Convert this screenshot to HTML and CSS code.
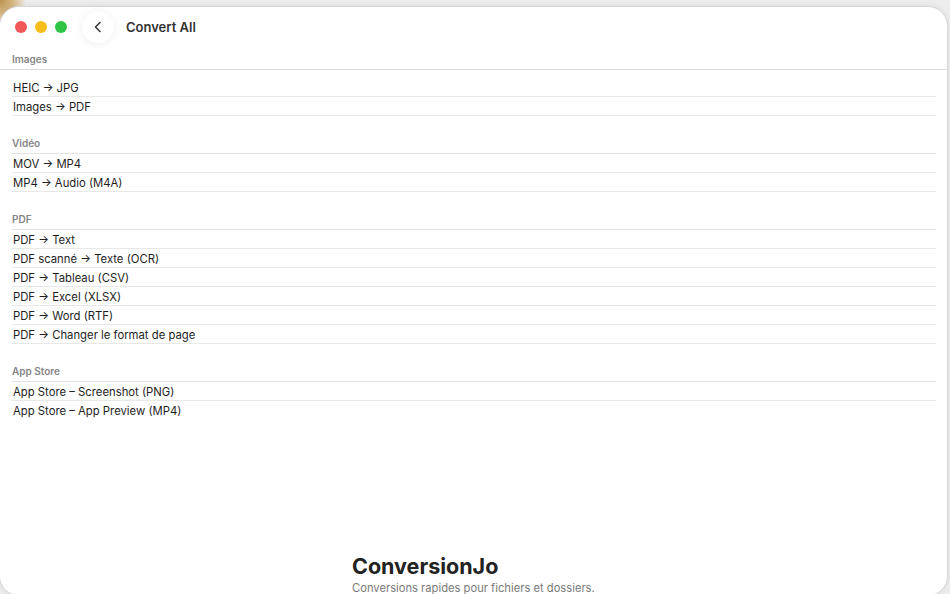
FILE: index.html
```html
<!DOCTYPE html>
<html>
<head>
  <title>Convert All</title>
  <link rel="stylesheet" href="styles.css">
</head>
<body>
  <div class="window">
    <header class="titlebar">
      <div class="toolbar">
        <div class="lights">
          <span class="light red"></span>
          <span class="light yellow"></span>
          <span class="light green"></span>
        </div>
        <button class="back" type="button" aria-label="Back">
          <svg width="14" height="14" viewBox="0 0 14 14">
            <path d="M9 2.5 L4.5 7 L9 11.5" fill="none" stroke="#3a3a3a" stroke-width="1.6" stroke-linecap="round" stroke-linejoin="round"/>
          </svg>
        </button>
        <h1 class="title">Convert All</h1>
      </div>
      <div class="first-label">Images</div>
    </header>

    <main class="list">
      <section class="group first">
        <ul>
          <li>HEIC → JPG</li>
          <li>Images → PDF</li>
        </ul>
      </section>

      <section class="group">
        <h2>Vidéo</h2>
        <ul>
          <li>MOV → MP4</li>
          <li>MP4 → Audio (M4A)</li>
        </ul>
      </section>

      <section class="group">
        <h2>PDF</h2>
        <ul>
          <li>PDF → Text</li>
          <li>PDF scanné → Texte (OCR)</li>
          <li>PDF → Tableau (CSV)</li>
          <li>PDF → Excel (XLSX)</li>
          <li>PDF → Word (RTF)</li>
          <li>PDF → Changer le format de page</li>
        </ul>
      </section>

      <section class="group">
        <h2>App Store</h2>
        <ul>
          <li>App Store – Screenshot (PNG)</li>
          <li class="last">App Store – App Preview (MP4)</li>
        </ul>
      </section>
    </main>

    <footer class="footer">
      <div class="brand">
        <div class="brand-name">ConversionJo</div>
        <div class="brand-tag">Conversions rapides pour fichiers et dossiers.</div>
      </div>
    </footer>
  </div>
</body>
</html>
```

FILE: styles.css
```css
html, body {
  margin: 0;
  padding: 0;
  height: 100%;
  overflow: hidden;
}

body {
  background:
    radial-gradient(circle at 0 0, #b98f4f 0, #d8bb86 14px, rgba(236, 236, 236, 0) 26px),
    #ededed;
  font-family: Inter, "Noto Sans", "Liberation Sans", sans-serif;
  color: #1e1e1e;
}

.window {
  box-sizing: border-box;
  width: 949px;
  height: 590px;
  margin: 6px 0 0 -1px;
  background: #fff;
  border-radius: 20px;
  border: 1px solid #d6d6d6;
  box-shadow: 0 0 6px rgba(0, 0, 0, 0.08);
  display: flex;
  flex-direction: column;
}

/* title bar */
.titlebar {
  border-bottom: 1px solid #dcdcdc;
}

.toolbar {
  height: 40px;
  display: flex;
  align-items: center;
  padding-left: 15px;
}

.lights {
  display: flex;
  gap: 8px;
}

.light {
  width: 12px;
  height: 12px;
  border-radius: 50%;
}

.red { background: #f0585a; }
.yellow { background: #f6bd1b; }
.green { background: #2fc443; }

.back {
  width: 32px;
  height: 32px;
  margin-left: 15px;
  border: none;
  border-radius: 50%;
  background: #fff;
  box-shadow: 0 1px 10px rgba(0, 0, 0, 0.07);
  display: flex;
  align-items: center;
  justify-content: center;
  padding: 0;
}

.title {
  margin: 0 0 0 12px;
  font-size: 13px;
  font-weight: 600;
  color: #333;
}

.first-label {
  padding: 7px 0 4px 12px;
  font-size: 10px;
  line-height: 11px;
  font-weight: 600;
  color: #858585;
}

/* list */
.list {
  padding: 0 11px 0 12px;
}

.group {
  margin-top: 22px;
}

.group.first {
  margin-top: 8px;
}

.group h2 {
  margin: 0;
  padding-bottom: 4px;
  font-size: 10px;
  line-height: 11px;
  font-weight: 600;
  color: #858585;
  border-bottom: 1px solid #e3e3e3;
}

.group ul {
  list-style: none;
  margin: 0;
  padding: 0;
}

.group li {
  height: 18px;
  line-height: 20px;
  padding-left: 1px;
  font-size: 11.3px;
  color: #1e1e1e;
  border-bottom: 1px solid #e8e8e8;
}

.group li.last {
  border-bottom: none;
}

/* footer */
.footer {
  margin-top: auto;
  display: flex;
  justify-content: center;
}

.brand {
  width: 244px;
  margin-left: 1px;
}

.brand-name {
  font-size: 21.5px;
  line-height: 24px;
  font-weight: 700;
  color: #222;
}

.brand-tag {
  margin-top: 4px;
  font-size: 11.2px;
  line-height: 13px;
  color: #7a7a7a;
}
```
